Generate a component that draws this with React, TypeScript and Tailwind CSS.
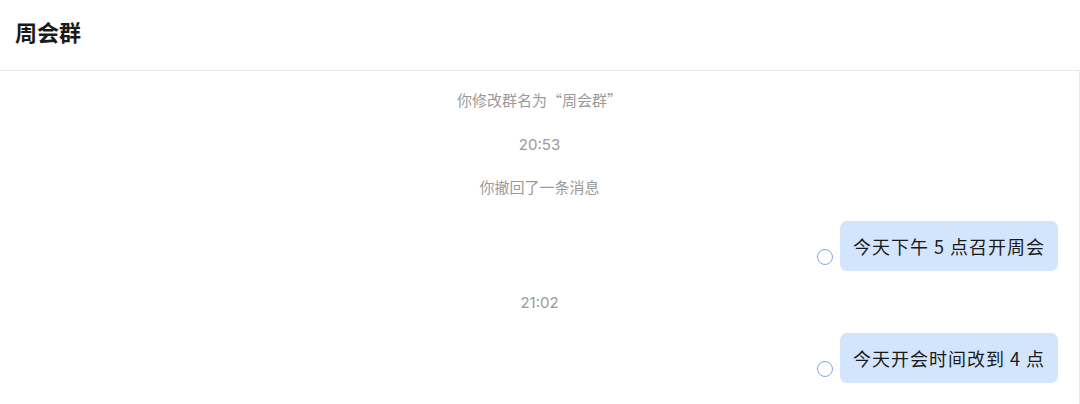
const CJK = '"Noto Sans CJK SC", "Noto Sans", sans-serif';
const LATIN = 'Inter, "Noto Sans CJK SC", sans-serif';

function SystemLine({ text, latin, className }: { text: string; latin?: boolean; className?: string }) {
  return (
    <div
      className={`text-center text-[15px] leading-[20px] text-[#9a9a9a] ${className ?? ""}`}
      style={{ fontFamily: latin ? LATIN : CJK }}
    >
      {text}
    </div>
  );
}

function MyMessage({ text, className }: { text: string; className?: string }) {
  return (
    <div className={`flex items-end justify-end pr-[21px] ${className ?? ""}`}>
      <div className="mb-[6px] mr-[7px] h-[16px] w-[16px] rounded-full border-[1.5px] border-[#7ea6ee]" />
      <div className="rounded-[7px] bg-[#d2e5fc] pl-[13px] pr-[13px] py-[12px] text-[18px] leading-[26px] tracking-[1px] text-[#1a1a1a]">
        {text}
      </div>
    </div>
  );
}

export default function App() {
  return (
    <main className="h-[404px] w-[1080px] overflow-hidden bg-white" style={{ fontFamily: CJK }}>
      {/* HEADER */}
      <div className="flex h-[71px] items-center border-b border-[#e8e8e8] pl-[15px] pb-[8px]">
        <h1 className="text-[22px] font-bold text-[#1a1a1a]">周会群</h1>
      </div>

      {/* CHAT */}
      <div className="h-[333px] border-r border-[#e8e8e8] pt-[19px]">
        <SystemLine text="你修改群名为“周会群”" />
        <SystemLine text="20:53" latin className="mt-[25px]" />
        <SystemLine text="你撤回了一条消息" className="mt-[22px]" />
        <MyMessage text="今天下午 5 点召开周会" className="mt-[24px]" />
        <SystemLine text="21:02" latin className="mt-[22px]" />
        <MyMessage text="今天开会时间改到 4 点" className="mt-[20px]" />
      </div>
    </main>
  );
}
